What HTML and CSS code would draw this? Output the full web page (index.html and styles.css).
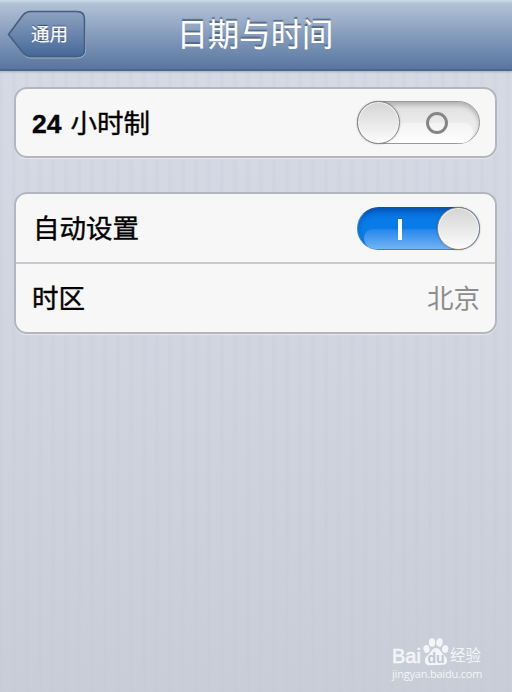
FILE: index.html
```html
<!DOCTYPE html>
<html lang="zh-CN">
<head>
<meta charset="utf-8">
<title>日期与时间</title>
<link rel="stylesheet" href="styles.css">
</head>
<body>
<header class="navbar">
  <a class="back">
    <svg class="back-shape" width="80" height="50" viewBox="0 0 80 50">
      <defs>
        <linearGradient id="backFill" x1="0" y1="0" x2="0" y2="1">
          <stop offset="0" stop-color="#8da2bf"/>
          <stop offset=".5" stop-color="#6a86ae"/>
          <stop offset="1" stop-color="#456898"/>
        </linearGradient>
      </defs>
      <path d="M2 25.500 17 6Q20 2.500 24 2.500H70Q78.500 2.500 78.500 10V40Q78.500 48 70 48H24Q20 48 17 45Z" fill="none" stroke="#a9bcd4" stroke-opacity=".8"/>
      <path d="M1.500 24.500 16 5Q19.500 1.500 23 1.500H70Q77.500 1.500 77.500 9V39Q77.500 46.500 70 46.500H23Q19.500 46.500 16 43Z" fill="url(#backFill)" stroke="#465c80" stroke-width="1.600"/>
    </svg>
    <span class="back-label">通用</span>
  </a>
  <h1 class="title">日期与时间</h1>
</header>
<main class="content">
  <section class="group">
    <div class="row">
      <span class="label"><b>24</b>小时制</span>
      <span class="switch off"><i class="gloss"></i><i class="ring"></i><i class="knob"></i></span>
    </div>
  </section>
  <section class="group">
    <div class="row first">
      <span class="label shifted">自动设置</span>
      <span class="switch on"><i class="gloss"></i><i class="bar"></i><i class="knob"></i></span>
    </div>
    <div class="row">
      <span class="label">时区</span>
      <span class="value">北京</span>
    </div>
  </section>
</main>
<footer class="watermark">
  <div class="brand">
    <span class="bai">Bai</span>
    <svg class="paw" width="26" height="28" viewBox="0 0 26 28">
      <g fill="#f3f5f9">
        <ellipse cx="3.500" cy="11" rx="3.100" ry="3.900" transform="rotate(-15 3.500 11)"/>
        <ellipse cx="9" cy="4.500" rx="3.200" ry="4.200"/>
        <ellipse cx="16.500" cy="4.500" rx="3.200" ry="4.200" transform="rotate(10 16.500 4.500)"/>
        <ellipse cx="22.200" cy="11" rx="3.100" ry="3.900" transform="rotate(12 22.200 11)"/>
        <path d="M13 10C9.500 10 8.500 13.500 6 16S1.500 20 2 23.500C2.600 28 7 27.500 13 27S23.400 28 24 23.500C24.500 20 22 18 19.500 15.500S16.500 10 13 10Z"/>
      </g>
      <text x="13" y="24.500" text-anchor="middle" class="du">du</text>
    </svg>
    <span class="jingyan">经验</span>
  </div>
  <div class="url">jingyan.baidu.com</div>
</footer>
</body>
</html>
```
FILE: styles.css
```css
* { box-sizing: border-box; }
body {
  margin: 0;
  height: 692px;
  overflow: hidden;
  position: relative;
  font-family: "Liberation Sans", "Noto Sans CJK SC", sans-serif;
  background:
    repeating-linear-gradient(90deg, rgba(190,200,215,.2) 0 2px, transparent 4px 11px, rgba(190,200,215,.2) 13px),
    linear-gradient(#d6dbe6, #d0d5e0 50%, #c9cdd7);
}
.navbar {
  position: relative;
  height: 71px;
  display: flex;
  justify-content: center;
  background: linear-gradient(#c8dbe8 0, #c0d2e1 2px, #b3c3d7 3px, #859cbc 35px, #59769f 69px);
  border-bottom: 2px solid #4b678e;
  box-shadow: 0 1px 2px rgba(80,90,110,.35);
}
.back {
  position: absolute;
  left: 7px;
  top: 10px;
  width: 80px;
  height: 50px;
}
.back-shape { display: block; }
.back-label {
  position: absolute;
  left: 24px;
  top: 12px;
  font-size: 18.500px;
  line-height: 26px;
  color: #fff;
  -webkit-text-stroke: .2px #fff;
  text-shadow: 0 -1px 1px #344b70;
}
.title {
  margin: 0 0 0 -2px;
  padding-top: 14px;
  font-size: 31.300px;
  line-height: 44px;
  font-weight: 400;
  color: #fff;
  -webkit-text-stroke: .2px #fff;
  text-shadow: 0 -2px 1px #566985;
}
.content {
  display: flex;
  flex-direction: column;
  gap: 34px;
  padding: 16px 15px 0 14px;
}
.group {
  border: 2px solid #b3b6bf;
  border-radius: 13px;
  background: #f7f7f7;
  box-shadow: 0 1px 1px #e6e9f0;
}
.row {
  height: 67px;
  display: flex;
  align-items: center;
  justify-content: space-between;
  padding: 0 15px 0 16px;
}
.first { height: 68px; }
.row + .row { border-top: 2px solid #c9cacd; height: 70px; }
.label {
  padding-top: 2px;
  font-size: 26.500px;
  line-height: 40px;
  color: #000;
  -webkit-text-stroke: .4px #000;
}
.label b { margin-right: 9px; }
.shifted { margin-left: 1px; }
.value { padding-top: 2px; font-size: 26.500px; line-height: 40px; color: #8d8d8d; }
.switch {
  position: relative;
  width: 123px;
  height: 43px;
  border-radius: 22px;
}
.off {
  border: 1px solid #999;
  background: linear-gradient(#dedede, #ebebeb 50%, #f0f0f0);
  box-shadow: inset 0 3px 4px rgba(0,0,0,.2);
}
.on {
  border: 1px solid #3b83ce;
  border-top-color: #19509b;
  background: linear-gradient(#0569d5, #087be8 30%, #087de9);
  box-shadow: inset 0 3px 4px rgba(0,45,120,.35);
}
.gloss {
  position: absolute;
  left: 6px;
  right: 6px;
  bottom: 0;
  height: 20px;
  border-radius: 14px 14px 18px 18px;
}
.off .gloss { background: linear-gradient(#f3f3f3, #fefefe); }
.on .gloss { background: linear-gradient(#2486ea, #72b4f5); }
.knob {
  position: absolute;
  top: -1px;
  width: 43px;
  height: 43px;
  border: 1.500px solid #858585;
  border-radius: 50%;
  background: linear-gradient(#d4d4d4, #fcfcfc);
  box-shadow: inset 0 0 0 1px rgba(255,255,255,.7), 0 0 2px rgba(0,0,0,.3);
}
.off .knob { left: -1px; }
.on .knob { right: -1px; }
.ring {
  position: absolute;
  left: 68px;
  top: 10px;
  width: 22px;
  height: 22px;
  border: 3px solid #858585;
  border-radius: 50%;
}
.bar {
  position: absolute;
  left: 40px;
  top: 11px;
  width: 4px;
  height: 21px;
  background: #fff;
  box-shadow: 0 -1px 0 #2864a8;
}
.watermark {
  position: absolute;
  left: 392px;
  top: 638px;
  width: 96px;
  color: #f3f5f9;
}
.brand { display: flex; height: 28px; align-items: flex-end; }
.bai { width: 31px; font-size: 20px; line-height: 20px; font-weight: 400; -webkit-text-stroke: .6px #f3f5f9; }
.paw { display: block; flex: none; }
.du { font: 700 14px "Liberation Sans", sans-serif; fill: #bfc5d1; }
.jingyan { margin-left: 1px; font-size: 15.500px; line-height: 20px; white-space: nowrap; }
.url { font: 11px/15px "Open Sans", sans-serif; letter-spacing: -.2px; white-space: nowrap; }
```
